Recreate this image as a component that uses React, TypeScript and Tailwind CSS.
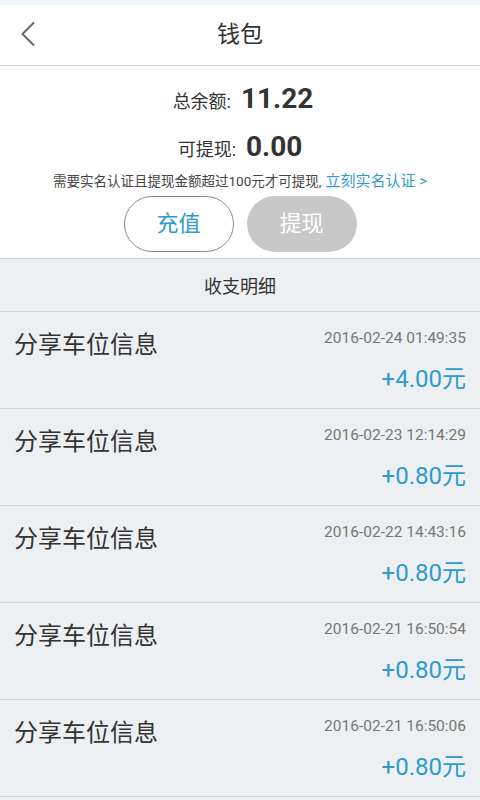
import React from 'react';

const font = { fontFamily: 'Roboto, "Noto Sans CJK SC", sans-serif' };

const records = [
  { title: '分享车位信息', time: '2016-02-24 01:49:35', amount: '+4.00元' },
  { title: '分享车位信息', time: '2016-02-23 12:14:29', amount: '+0.80元' },
  { title: '分享车位信息', time: '2016-02-22 14:43:16', amount: '+0.80元' },
  { title: '分享车位信息', time: '2016-02-21 16:50:54', amount: '+0.80元' },
  { title: '分享车位信息', time: '2016-02-21 16:50:06', amount: '+0.80元' },
];

export default function App() {
  return (
    <div className="w-[480px] h-[800px] overflow-hidden bg-[#ecf0f2]" style={font}>
      {/* status strip */}
      <div className="h-[5px] bg-[#eef9fb]" />

      {/* Header */}
      <div className="h-[61px] bg-white border-b border-[#d4d4d4] flex items-center relative">
        <div className="w-[56px] flex justify-center pb-[3px]">
          <svg width="16" height="26" viewBox="0 0 16 26" fill="none">
            <path d="M14 1.5 L2.5 13 L14 24.5" stroke="#666" strokeWidth="2" />
          </svg>
        </div>
        <div className="absolute left-0 right-0 text-center text-[23px] text-[#333] pointer-events-none">钱包</div>
      </div>

      {/* Balance */}
      <div className="bg-white border-b border-[#d4d4d4] h-[193px] flex flex-col items-center">
        <div className="flex items-baseline mt-[12px] h-[34px] pl-[6px]">
          <span className="text-[18px] text-[#333]">总余额:</span>
          <span className="text-[28px] font-bold text-[#333] ml-[10px]">11.22</span>
        </div>
        <div className="flex items-baseline mt-[14px] h-[34px]">
          <span className="text-[18px] text-[#333]">可提现:</span>
          <span className="text-[28px] font-bold text-[#333] ml-[10px]">0.00</span>
        </div>
        <div className="mt-[10px] flex items-baseline whitespace-nowrap">
          <span className="text-[13.5px] text-[#444]">需要实名认证且提现金额超过100元才可提现,</span>
          <span className="text-[15px] text-[#2f9acb] ml-[4px]">立刻实名认证 &gt;</span>
        </div>
        <div className="flex gap-[13px] mt-[3px]">
          <button className="w-[110px] h-[56px] rounded-full border border-[#8a8a8a] bg-white text-[22px] text-[#2f9acb]">充值</button>
          <button className="w-[110px] h-[56px] rounded-full bg-[#c8c8c8] text-[22px] text-white">提现</button>
        </div>
      </div>

      {/* Section title */}
      <div className="h-[53px] border-b border-[#d4d8db] flex items-center justify-center pt-[3px] text-[18px] text-[#333]">
        收支明细
      </div>

      {records.map((r, i) => (
        <div key={i} className="h-[97px] border-b border-[#d4d8db] px-[14px] pt-[16px] flex flex-col">
          <div className="flex justify-between items-start">
            <span className="text-[24px] text-[#333] leading-[34px]">{r.title}</span>
            <span className="text-[15.5px] text-[#777] leading-[24px] -mt-[2px]">{r.time}</span>
          </div>
          <div className="text-right text-[24px] text-[#2f9acb] leading-[30px] mt-[2px]">{r.amount}</div>
        </div>
      ))}
    </div>
  );
}
